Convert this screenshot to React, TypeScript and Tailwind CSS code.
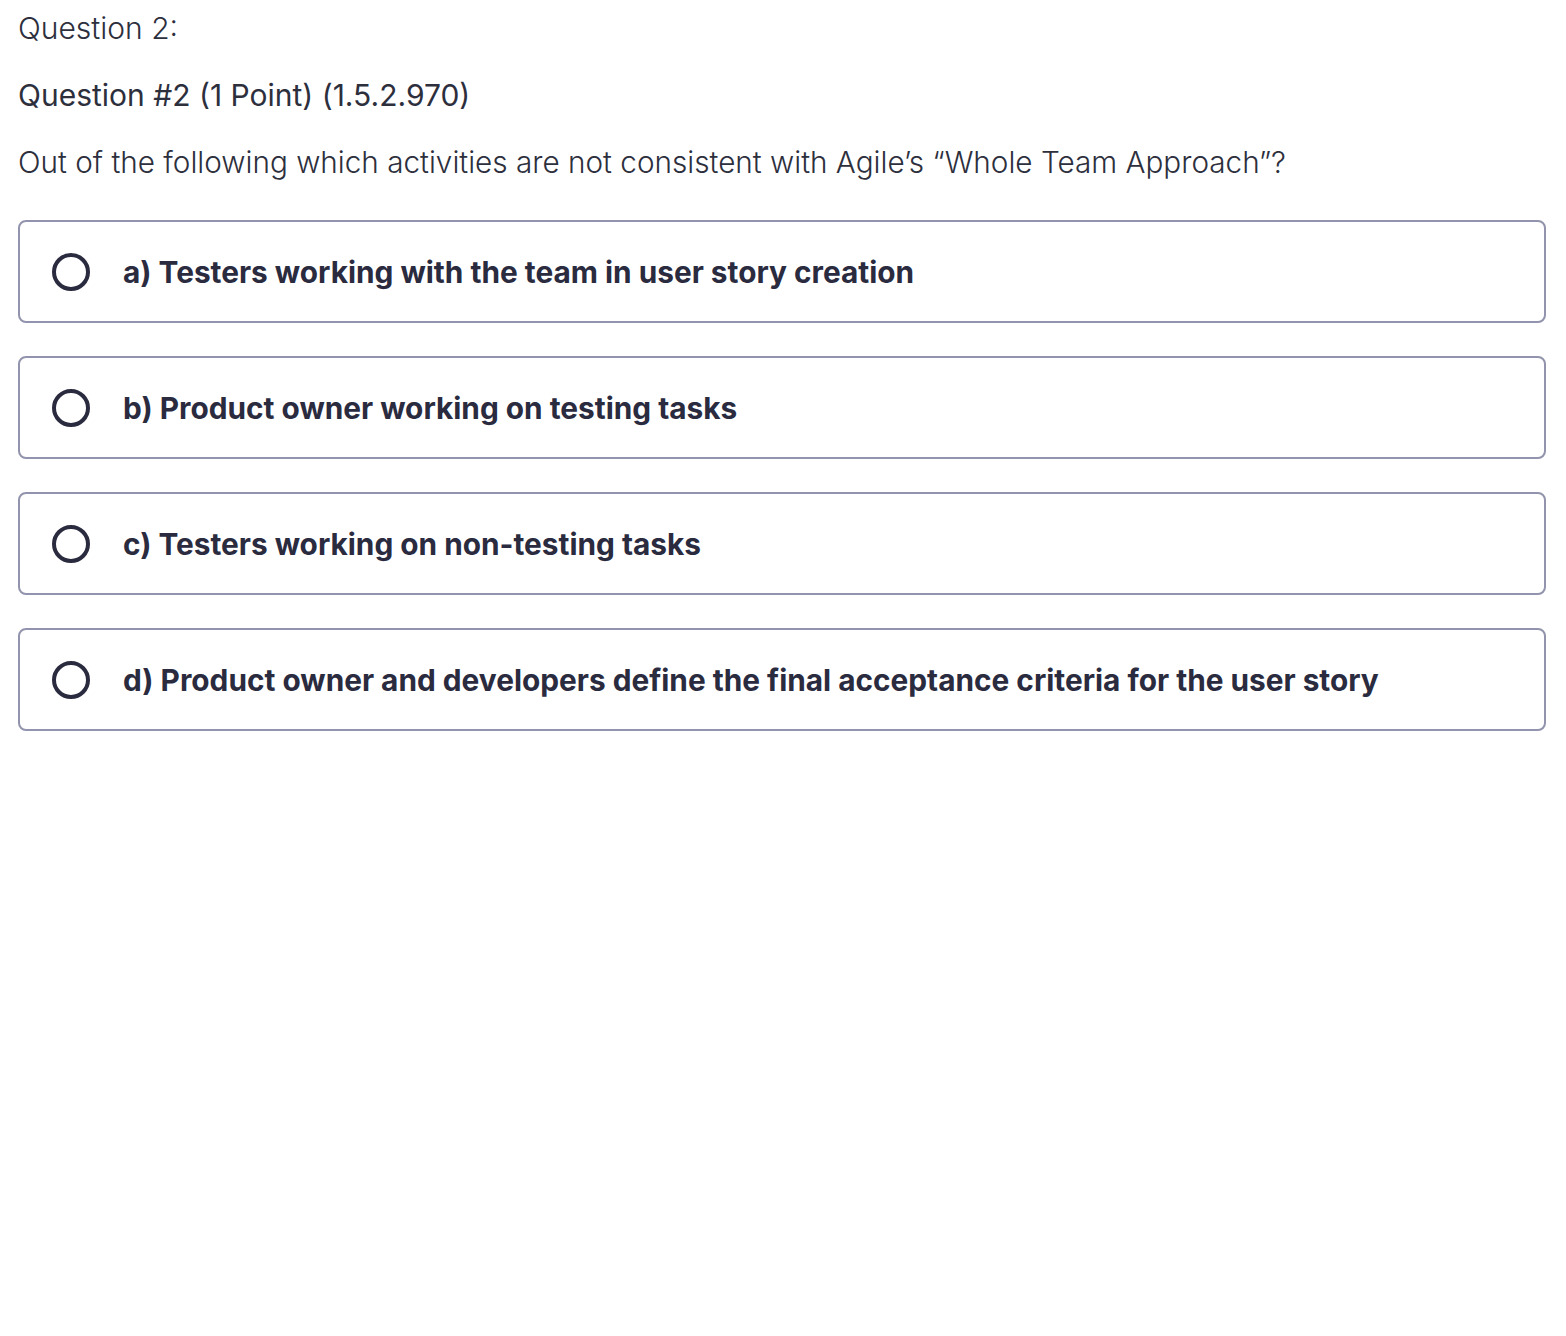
const OPTIONS = [
  "a) Testers working with the team in user story creation",
  "b) Product owner working on testing tasks",
  "c) Testers working on non-testing tasks",
  "d) Product owner and developers define the final acceptance criteria for the user story",
];

function Radio() {
  return (
    <span className="block h-[38px] w-[38px] shrink-0 rounded-full border-[4px] border-[#2a2b3f]" />
  );
}

export default function App() {
  return (
    <div
      className="min-h-[1336px] w-[1566px] bg-white pl-[18px] pr-[20px] pt-2 text-[#2d2f3d]"
      style={{ fontFamily: "Inter, 'Noto Sans', sans-serif" }}
    >
      <p className="text-[30px] font-light leading-[40px]">Question 2:</p>
      <p className="mt-[27px] text-[30px] font-normal leading-[40px]">
        Question #2 (1 Point) (1.5.2.970)
      </p>
      <p className="mt-[27px] text-[29.7px] font-light leading-[40px]">
        Out of the following which activities are not consistent with Agile’s “Whole Team Approach”?
      </p>
      <div className="mt-[38px] flex flex-col gap-[33px]">
        {OPTIONS.map((o) => (
          <label
            key={o}
            className="flex h-[103px] items-center gap-[33px] rounded-[8px] border-2 border-[#9194ac] pl-[32px]"
          >
            <Radio />
            <span className="text-[29.8px] font-bold leading-[40px] text-[#2a2b3f]">{o}</span>
          </label>
        ))}
      </div>
    </div>
  );
}
